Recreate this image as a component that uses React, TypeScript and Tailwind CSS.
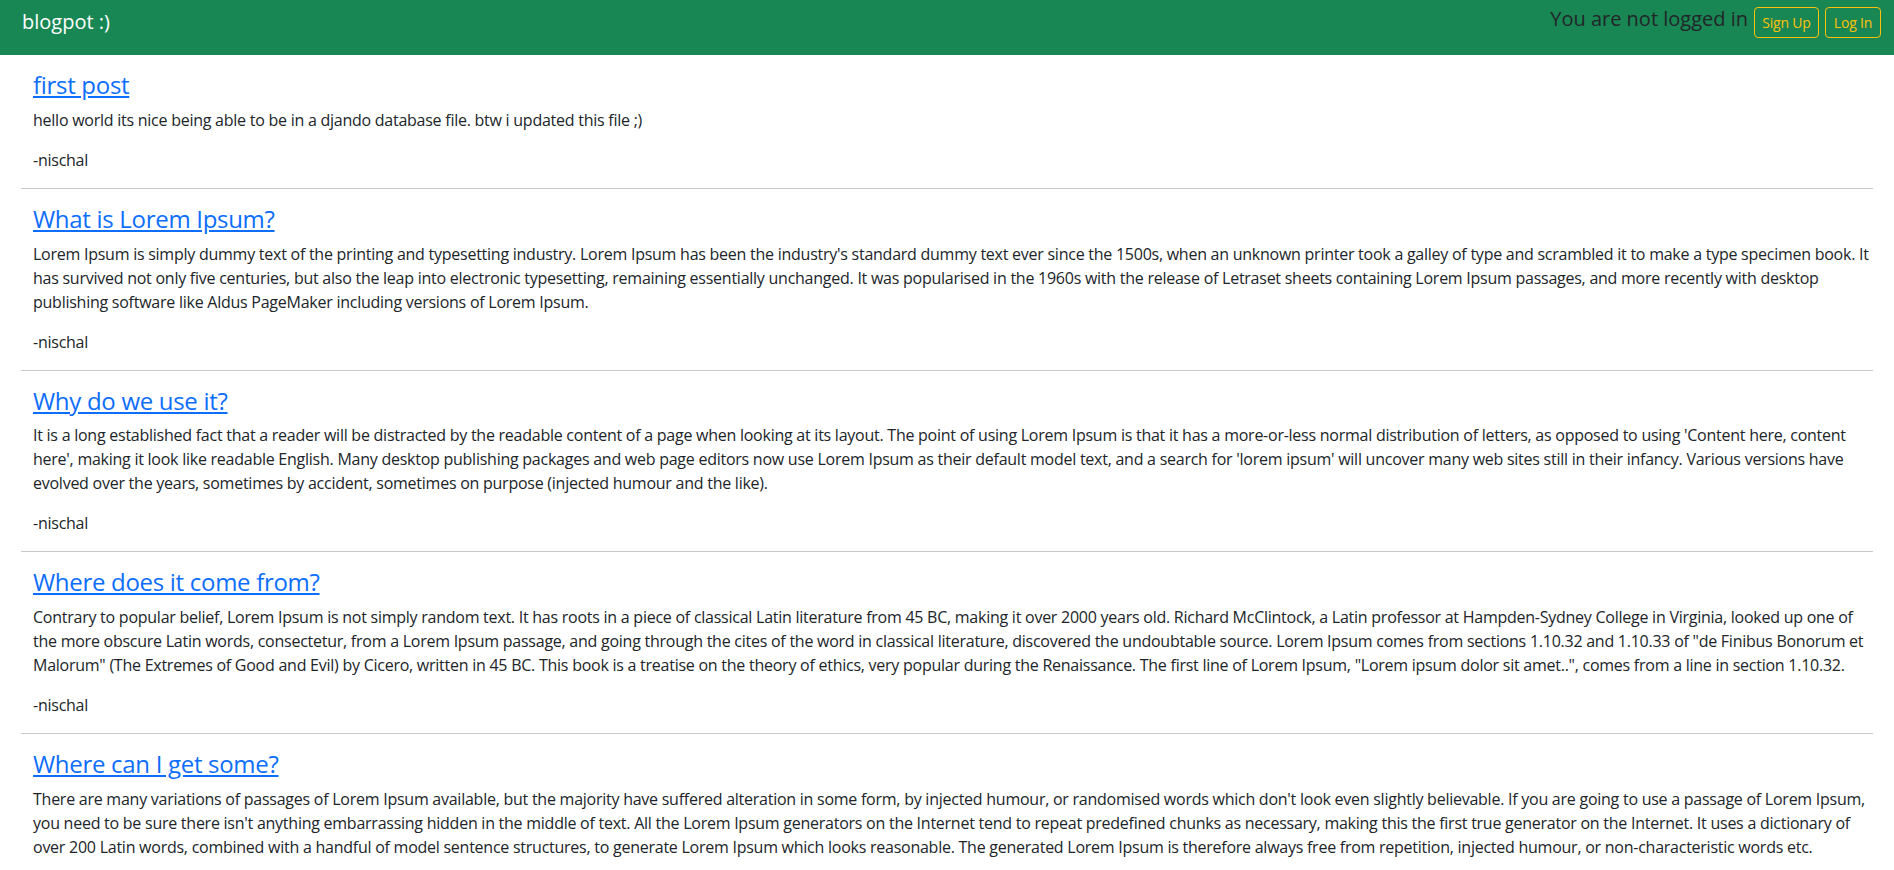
import React from "react";

type Post = { title: string; lines: string[] };

const posts: Post[] = [
  {
    title: "first post",
    lines: ["hello world its nice being able to be in a djando database file. btw i updated this file ;)"],
  },
  {
    title: "What is Lorem Ipsum?",
    lines: [
      "Lorem Ipsum is simply dummy text of the printing and typesetting industry. Lorem Ipsum has been the industry's standard dummy text ever since the 1500s, when an unknown printer took a galley of type and scrambled it to make a type specimen book. It",
      "has survived not only five centuries, but also the leap into electronic typesetting, remaining essentially unchanged. It was popularised in the 1960s with the release of Letraset sheets containing Lorem Ipsum passages, and more recently with desktop",
      "publishing software like Aldus PageMaker including versions of Lorem Ipsum.",
    ],
  },
  {
    title: "Why do we use it?",
    lines: [
      "It is a long established fact that a reader will be distracted by the readable content of a page when looking at its layout. The point of using Lorem Ipsum is that it has a more-or-less normal distribution of letters, as opposed to using 'Content here, content",
      "here', making it look like readable English. Many desktop publishing packages and web page editors now use Lorem Ipsum as their default model text, and a search for 'lorem ipsum' will uncover many web sites still in their infancy. Various versions have",
      "evolved over the years, sometimes by accident, sometimes on purpose (injected humour and the like).",
    ],
  },
  {
    title: "Where does it come from?",
    lines: [
      "Contrary to popular belief, Lorem Ipsum is not simply random text. It has roots in a piece of classical Latin literature from 45 BC, making it over 2000 years old. Richard McClintock, a Latin professor at Hampden-Sydney College in Virginia, looked up one of",
      "the more obscure Latin words, consectetur, from a Lorem Ipsum passage, and going through the cites of the word in classical literature, discovered the undoubtable source. Lorem Ipsum comes from sections 1.10.32 and 1.10.33 of \"de Finibus Bonorum et",
      "Malorum\" (The Extremes of Good and Evil) by Cicero, written in 45 BC. This book is a treatise on the theory of ethics, very popular during the Renaissance. The first line of Lorem Ipsum, \"Lorem ipsum dolor sit amet..\", comes from a line in section 1.10.32.",
    ],
  },
  {
    title: "Where can I get some?",
    lines: [
      "There are many variations of passages of Lorem Ipsum available, but the majority have suffered alteration in some form, by injected humour, or randomised words which don't look even slightly believable. If you are going to use a passage of Lorem Ipsum,",
      "you need to be sure there isn't anything embarrassing hidden in the middle of text. All the Lorem Ipsum generators on the Internet tend to repeat predefined chunks as necessary, making this the first true generator on the Internet. It uses a dictionary of",
      "over 200 Latin words, combined with a handful of model sentence structures, to generate Lorem Ipsum which looks reasonable. The generated Lorem Ipsum is therefore always free from repetition, injected humour, or non-characteristic words etc.",
    ],
  },
];

export default function App() {
  return (
    <div className="min-h-screen bg-white font-['Open_Sans',sans-serif] text-[#212529]">
      <nav className="flex h-[55px] items-start justify-between bg-[#198754] pl-[22px] pr-[13px] pt-[7px]">
        <a href="#" className="text-[20px] leading-[30px] text-white">
          blogpot :)
        </a>
        <div className="flex items-start gap-[6px]">
          <span className="text-[20px] leading-[24px] text-[#212529]">You are not logged in</span>
          <button className="h-[31px] w-[65px] rounded border border-[#ffc107] text-center text-[14px] leading-[21px] tracking-[-0.2px] text-[#ffc107]">
            Sign Up
          </button>
          <button className="h-[31px] w-[56px] rounded border border-[#ffc107] text-center text-[14px] leading-[21px] tracking-[-0.2px] text-[#ffc107]">
            Log In
          </button>
        </div>
      </nav>
      <main className="px-[21px] pt-4">
        {posts.map((p) => (
          <article key={p.title}>
            <div className="px-3">
              <h4 className="mb-2 text-[24px] leading-[28.8px] tracking-[-0.3px]">
                <a href="#" className="text-[#0d6efd] underline">
                  {p.title}
                </a>
              </h4>
              <p className="mb-4 whitespace-nowrap text-[16px] leading-6 tracking-[-0.25px]">
                {p.lines.map((l, i) => (
                  <React.Fragment key={i}>
                    {i > 0 && <br />}
                    {l}
                  </React.Fragment>
                ))}
              </p>
              <p className="mb-4 text-[16px] leading-6 tracking-[-0.25px]">-nischal</p>
            </div>
            <hr className="mb-4 border-0 border-t border-[#c8c9ca]" />
          </article>
        ))}
      </main>
    </div>
  );
}
